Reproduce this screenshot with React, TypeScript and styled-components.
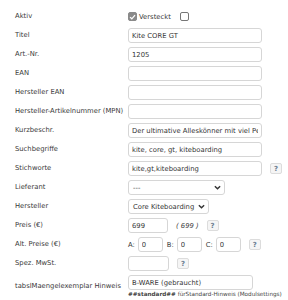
import React from 'react'
import styled, {createGlobalStyle} from 'styled-components'

const GlobalStyle = createGlobalStyle`
  body {
    margin: 0;
    background: #fff;
    font-family: 'DejaVu Sans', Verdana, sans-serif;
    font-size: 6.8px;
    color: #3a3a3a;
  }
`

export default function App() {
  return (
    <>
      <GlobalStyle />
      <Form>
        <Label>Aktiv</Label>
        <Inline>
          <Check checked />
          <span>Versteckt</span>
          <Spacer />
          <Check />
        </Inline>

        <Label>Titel</Label>
        <Field>
          <TextInput $width={134} defaultValue="Kite CORE GT" />
        </Field>

        <Label>Art.-Nr.</Label>
        <Field>
          <TextInput $width={134} defaultValue="1205" />
        </Field>

        <Label>EAN</Label>
        <Field>
          <TextInput $width={134} />
        </Field>

        <Label>Hersteller EAN</Label>
        <Field>
          <TextInput $width={134} />
        </Field>

        <Label>Hersteller-Artikelnummer (MPN)</Label>
        <Field>
          <TextInput $width={134} />
        </Field>

        <Label>Kurzbeschr.</Label>
        <Field>
          <TextInput
            $width={134}
            defaultValue="Der ultimative Alleskönner mit viel Performance"
          />
        </Field>

        <Label>Suchbegriffe</Label>
        <Field>
          <TextInput $width={134} defaultValue="kite, core, gt, kiteboarding" />
        </Field>

        <Label>Stichworte</Label>
        <Field>
          <TextInput $width={134} defaultValue="kite,gt,kiteboarding" />
          <Help />
        </Field>

        <Label>Lieferant</Label>
        <Field>
          <Select $width={97} value="---" />
        </Field>

        <Label>Hersteller</Label>
        <Field>
          <Select $width={81} value="Core Kiteboarding" />
        </Field>

        <Label>Preis (€)</Label>
        <Field>
          <TextInput $width={40} defaultValue="699" />
          <Gross>( 699 )</Gross>
          <Help />
        </Field>

        <Label>Alt. Preise (€)</Label>
        <Field>
          <Letter>A:</Letter>
          <TextInput $width={25} defaultValue="0" />
          <Letter>B:</Letter>
          <TextInput $width={25} defaultValue="0" />
          <Letter>C:</Letter>
          <TextInput $width={25} defaultValue="0" />
          <Help />
        </Field>

        <Label>Spez. MwSt.</Label>
        <Field>
          <TextInput $width={41} />
          <Help />
        </Field>

        <Label>tabslMaengelexemplar Hinweis</Label>
        <Stack>
          <TextInput $width={125} defaultValue="B-WARE (gebraucht)" />
          <Hint>
            <b>##standard##</b> fürStandard-Hinweis (Modulsettings)
          </Hint>
        </Stack>

        <Label />
        <Field>
          <TextInput $width={125} />
        </Field>
      </Form>
    </>
  )
}

function Check({checked}: {checked?: boolean}) {
  return (
    <CheckBox $checked={checked}>
      {checked && (
        <svg width={8} height={8} viewBox="0 0 10 10">
          <path d="M1.5 5.2 L4 7.6 L8.6 2.2" fill="none" stroke="#fff" strokeWidth={1.8} />
        </svg>
      )}
    </CheckBox>
  )
}

function Select({value, $width}: {value: string; $width: number}) {
  return (
    <SelectBox $width={$width}>
      <span>{value}</span>
      <svg width={7} height={5} viewBox="0 0 8 5">
        <path d="M1 1 L4 4 L7 1" fill="none" stroke="#333" strokeWidth={1.6} />
      </svg>
    </SelectBox>
  )
}

function Help() {
  return <HelpButton>?</HelpButton>
}

const Form = styled.div`
  display: grid;
  grid-template-columns: 113px 1fr;
  row-gap: 4px;
  padding: 9px 0 0 15px;
  align-items: center;
`

const Label = styled.div`
  line-height: 15px;
  white-space: nowrap;
`

const Field = styled.div`
  display: flex;
  align-items: center;
  height: 15px;
`

const Inline = styled(Field)`
  height: 12px;
  gap: 2px;
`

const Spacer = styled.span`
  width: 5px;
`

const Stack = styled.div`
  display: flex;
  flex-direction: column;
  gap: 1px;
`

const CheckBox = styled.span<{$checked?: boolean}>`
  width: 9px;
  height: 9px;
  box-sizing: border-box;
  border-radius: 2px;
  display: inline-flex;
  align-items: center;
  justify-content: center;
  background: ${p => (p.$checked ? '#8a8a8a' : '#fff')};
  border: 1px solid ${p => (p.$checked ? '#8a8a8a' : '#767676')};
`

const TextInput = styled.input<{$width: number}>`
  width: ${p => p.$width}px;
  height: 15px;
  box-sizing: border-box;
  border: 1px solid #d6d6d6;
  border-radius: 3px;
  padding: 0 3px;
  margin: 0;
  font: inherit;
  color: #333;
  background: #fff;
  outline: 0;
`

const SelectBox = styled.div<{$width: number}>`
  width: ${p => p.$width}px;
  height: 15px;
  box-sizing: border-box;
  border: 1px solid #d6d6d6;
  border-radius: 3px;
  padding: 0 3px 0 4px;
  display: flex;
  align-items: center;
  justify-content: space-between;
  gap: 3px;
  white-space: nowrap;
  overflow: hidden;
  color: #333;
`

const HelpButton = styled.span`
  margin-left: 8px;
  width: 12px;
  height: 11px;
  box-sizing: border-box;
  border: 1px solid #dcdcdc;
  border-radius: 2px;
  background: #f5f5f5;
  color: #6a7c90;
  font-weight: bold;
  font-size: 7px;
  display: inline-flex;
  align-items: center;
  justify-content: center;
`

const Gross = styled.span`
  margin-left: 8px;
  font-style: italic;
`

const Letter = styled.span`
  margin: 0 3px 0 0;
  & ~ & {
    margin-left: 4px;
  }
`

const Hint = styled.div`
  font-size: 5.7px;
  color: #444;
  white-space: nowrap;
  b {
    font-weight: bold;
  }
`
